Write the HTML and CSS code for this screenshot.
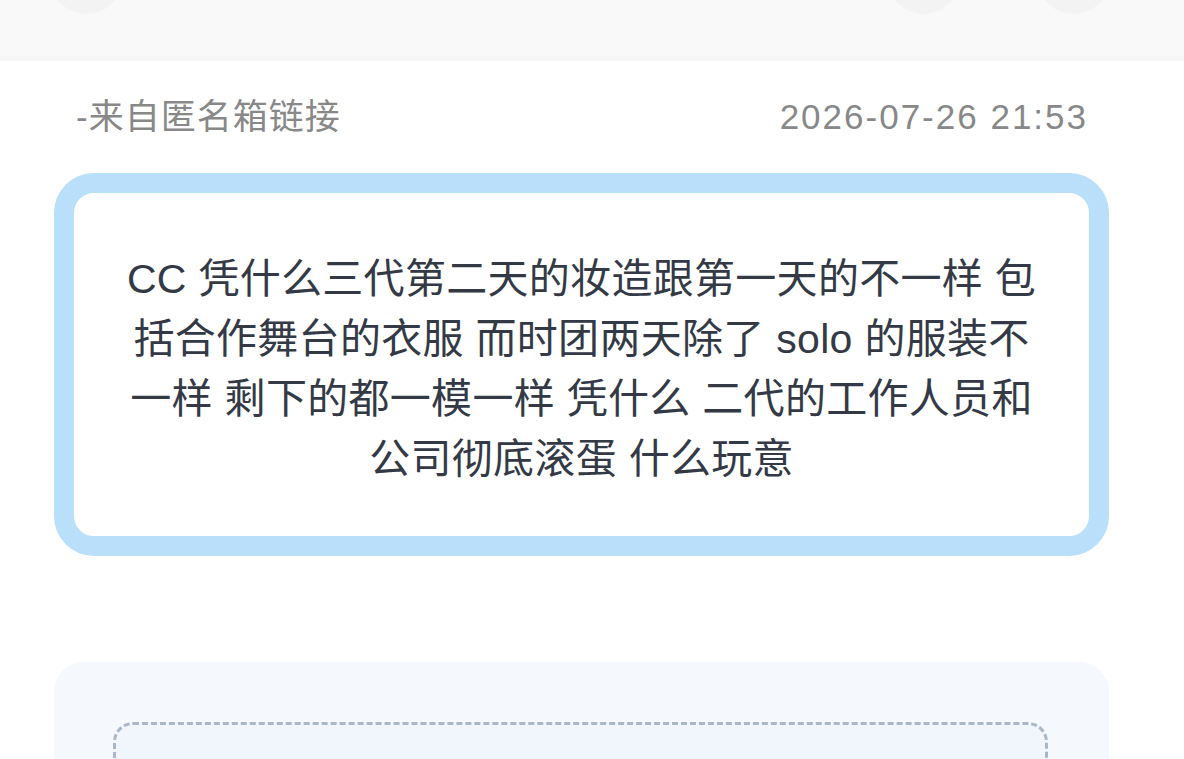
FILE: index.html
```html
<!DOCTYPE html>
<html lang="zh-CN">
<head>
    <meta charset="UTF-8">
    <meta name="viewport" content="width=device-width, initial-scale=1.0">
    <title>匿名箱</title>
    <link rel="stylesheet" href="styles.css">
</head>
<body>
    <div class="topbar">
        <div class="round-btn"></div>
        <div class="topbar-actions">
            <div class="round-btn"></div>
            <div class="round-btn"></div>
        </div>
    </div>

    <div class="meta">
        <span class="meta-source">-来自匿名箱链接</span>
        <span class="meta-time">2026-07-26 21:53</span>
    </div>

    <div class="message-card">
        <p class="message-text">CC 凭什么三代第二天的妆造跟第一天的不一样 包括合作舞台的衣服 而时团两天除了 solo 的服装不一样 剩下的都一模一样 凭什么 二代的工作人员和公司彻底滚蛋 什么玩意</p>
    </div>

    <div class="reply-panel">
        <div class="reply-box"></div>
    </div>
</body>
</html>
```

FILE: styles.css
```css
* {
    margin: 0;
    padding: 0;
    box-sizing: border-box;
}

body {
    font-family: 'Liberation Sans', 'Noto Sans CJK SC', sans-serif;
    background: #ffffff;
    width: 1184px;
    height: 759px;
    overflow: hidden;
}

/* top navigation bar, buttons sit partly above the viewport */
.topbar {
    height: 61px;
    background: #f9f9f9;
    border-bottom: 5px solid #f6f6f6;
    display: flex;
    justify-content: space-between;
    align-items: flex-start;
    padding: 0 74px 0 50px;
}

.topbar-actions {
    display: flex;
    gap: 77px;
}

.round-btn {
    width: 73px;
    height: 73px;
    margin-top: -59px;
    border-radius: 50%;
    background: #f3f3f3;
}

.meta {
    display: flex;
    justify-content: space-between;
    align-items: center;
    padding: 36px 98px 0 76px;
    font-size: 35px;
    line-height: 40px;
    color: #888888;
}

.meta-source {
    letter-spacing: 1px;
}

.meta-time {
    letter-spacing: 2px;
    margin-right: -2px;
}

.message-card {
    margin: 36px 75px 0 54px;
    height: 383px;
    border: 20px solid #b9dffb;
    border-radius: 40px;
    background: #ffffff;
    padding: 56px 42px 0;
}

.message-text {
    text-align: center;
    font-size: 41px;
    line-height: 60px;
    letter-spacing: 0.3px;
    color: #333a46;
}

.reply-panel {
    margin: 106px 75px 0 54px;
    height: 97px;
    overflow: hidden;
    background: #f5f8fc;
    border-radius: 30px 30px 0 0;
    padding: 60px 61px 0 59px;
}

.reply-box {
    height: 200px;
    background: #f1f6fd;
    border: 3px dashed #a9b8c8;
    border-radius: 20px;
}
```
